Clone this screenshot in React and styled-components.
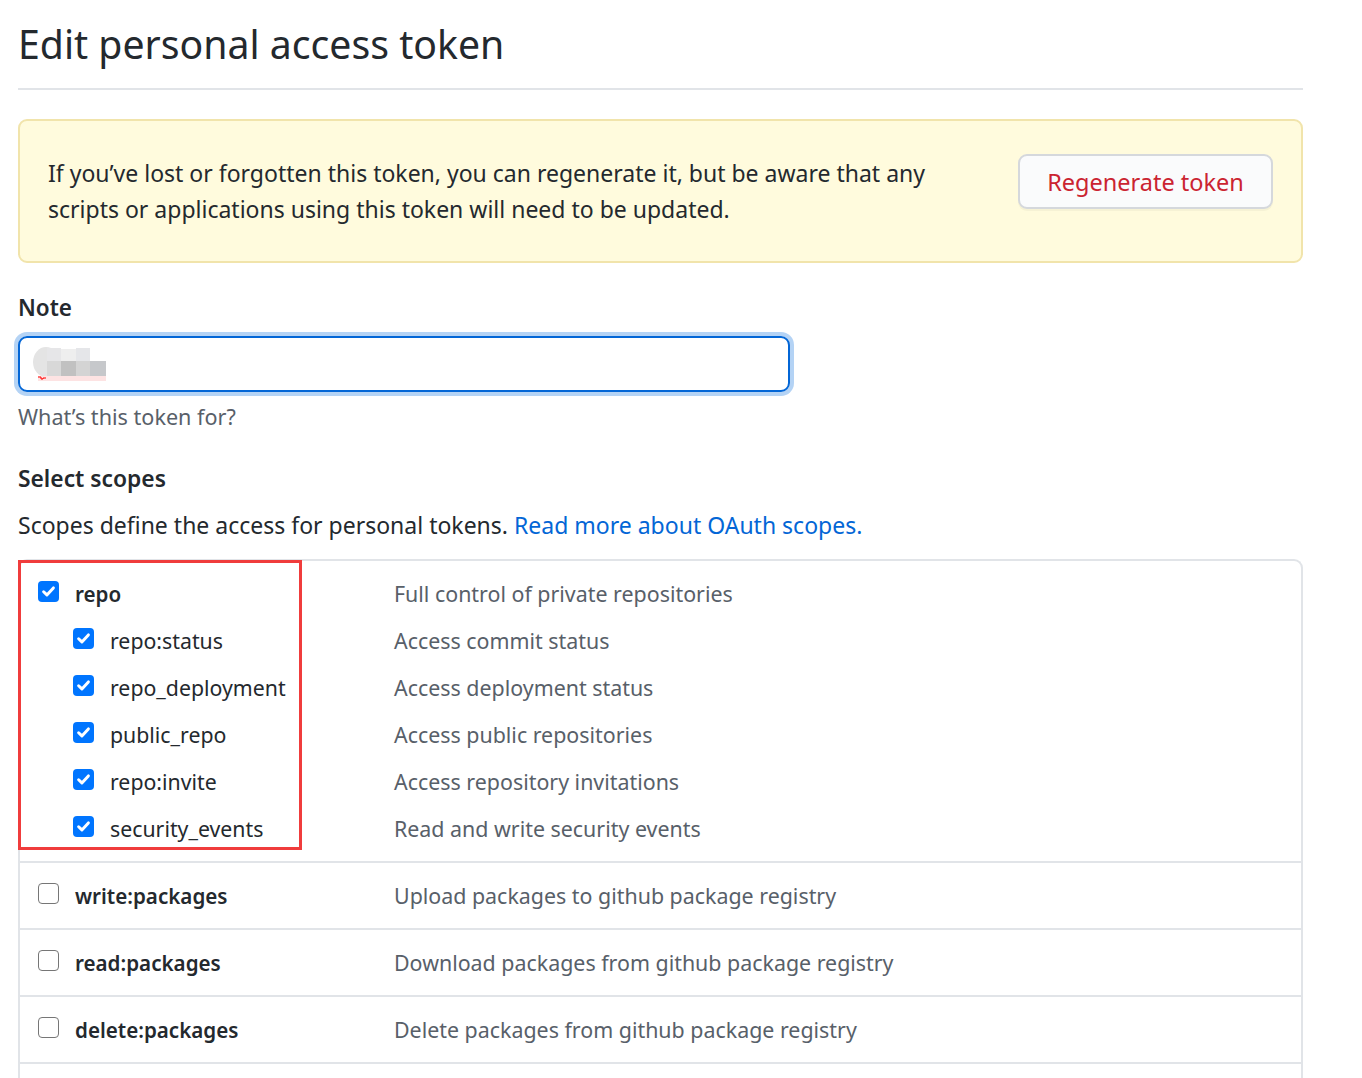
import React from "react";
import styled, { createGlobalStyle } from "styled-components";

const GlobalStyle = createGlobalStyle`
  html, body { margin: 0; padding: 0; background: #fff; }
  body {
    font-family: "Noto Sans", "Open Sans", "Liberation Sans", sans-serif;
    color: #24292e;
  }
`;

const scopeGroups = [
  {
    name: "repo",
    desc: "Full control of private repositories",
    checked: true,
    highlight: true,
    children: [
      { name: "repo:status", desc: "Access commit status" },
      { name: "repo_deployment", desc: "Access deployment status" },
      { name: "public_repo", desc: "Access public repositories" },
      { name: "repo:invite", desc: "Access repository invitations" },
      { name: "security_events", desc: "Read and write security events" },
    ],
  },
  { name: "write:packages", desc: "Upload packages to github package registry" },
  { name: "read:packages", desc: "Download packages from github package registry" },
  { name: "delete:packages", desc: "Delete packages from github package registry" },
  { name: "admin:org", desc: "Full control of orgs and teams, read and write org projects" },
];

const Checkbox = ({ checked }) => (
  <Box $checked={checked}>
    {checked && (
      <svg width="17" height="17" viewBox="0 0 16 16">
        <path
          d="M3.4 8.2 6.5 11.2 12.6 4.6"
          fill="none"
          stroke="#fff"
          strokeWidth="2.8"
          strokeLinecap="round"
          strokeLinejoin="round"
        />
      </svg>
    )}
  </Box>
);

// pixelated (redacted) value in the note field
const Redacted = () => (
  <svg width="75" height="36" viewBox="0 0 75 36">
    <ellipse cx="14" cy="16" rx="13" ry="15" fill="#e4e4e4" />
    <rect x="15" y="2" width="14" height="13" fill="#e6e6e8" />
    <rect x="29" y="3" width="15" height="12" fill="#eeeeee" />
    <rect x="44" y="2" width="14" height="13" fill="#e5e6e9" />
    <rect x="15" y="15" width="14" height="15" fill="#d8d8d8" />
    <rect x="29" y="15" width="15" height="15" fill="#c1c1c1" />
    <rect x="44" y="15" width="14" height="15" fill="#d4d4d4" />
    <rect x="58" y="15" width="16" height="15" fill="#c6c8cb" />
    <rect x="6" y="30" width="68" height="5" fill="#fde3e3" />
    <path d="M6 31h3v2h2v-1h3" stroke="#f00" strokeWidth="1" fill="none" />
  </svg>
);

const App = () => (
  <Page>
    <GlobalStyle />
    <Title>Edit personal access token</Title>

    <Flash>
      <FlashButton>Regenerate token</FlashButton>
      <FlashText>
        If you’ve lost or forgotten this token, you can regenerate it, but be aware that any
        <br />
        scripts or applications using this token will need to be updated.
      </FlashText>
    </Flash>

    <Label>Note</Label>
    <NoteInput>
      <Redacted />
    </NoteInput>
    <Hint>What’s this token for?</Hint>

    <Label $spaced>Select scopes</Label>
    <Lead>
      Scopes define the access for personal tokens. <Link>Read more about OAuth scopes.</Link>
    </Lead>

    <ScopeTable>
      {scopeGroups.map((group) => (
        <Group key={group.name}>
          {group.highlight && <Highlight />}
          <Row>
            <NameCell>
              <Checkbox checked={group.checked} />
              <ParentName>{group.name}</ParentName>
            </NameCell>
            <Desc>{group.desc}</Desc>
          </Row>
          {(group.children || []).map((child) => (
            <Row key={child.name}>
              <NameCell $child>
                <Checkbox checked={group.checked} />
                <ChildName>{child.name}</ChildName>
              </NameCell>
              <Desc>{child.desc}</Desc>
            </Row>
          ))}
        </Group>
      ))}
    </ScopeTable>
  </Page>
);

export default App;

const Page = styled.div`
  width: 1285px;
  padding: 0 0 0 18px;
`;

const Title = styled.h2`
  margin: 19px 0 0;
  padding-bottom: 19px;
  font-size: 39.2px;
  line-height: 50px;
  font-weight: 400;
  border-bottom: 2px solid #e1e4e8;
`;

const Flash = styled.div`
  margin-top: 29px;
  padding: 34px 28px;
  background: #fffbdd;
  border: 2px solid #f1e4ab;
  border-radius: 9px;
  display: flex;
  flex-direction: row-reverse;
  justify-content: space-between;
  align-items: flex-start;
`;

const FlashText = styled.p`
  margin: 0;
  font-size: 23px;
  line-height: 36px;
`;

const FlashButton = styled.button`
  margin-top: -1px;
  width: 255px;
  height: 55px;
  background: #fafbfc;
  border: 2px solid #d5d8dc;
  border-radius: 9px;
  box-shadow: 0 2px 0 rgba(27, 31, 35, 0.04);
  color: #cb2431;
  font-family: inherit;
  font-size: 23.5px;
  font-weight: 400;
`;

const Label = styled.div`
  margin-top: ${(p) => (p.$spaced ? "30px" : "28px")};
  font-size: ${(p) => (p.$spaced ? "22.8px" : "22.5px")};
  line-height: 33px;
  font-weight: 600;
`;

const NoteInput = styled.div`
  margin-top: 12px;
  box-sizing: border-box;
  width: 772px;
  height: 56px;
  border: 2px solid #0366d6;
  border-radius: 9px;
  box-shadow: 0 0 0 4px #b4d3f5;
  display: flex;
  align-items: center;
  padding-left: 12px;
`;

const Hint = styled.div`
  margin-top: 10px;
  font-size: 21.6px;
  line-height: 30px;
  color: #586069;
`;

const Lead = styled.p`
  margin: 14px 0 0;
  font-size: 23px;
  line-height: 33px;
`;

const Link = styled.a`
  color: #0366d6;
  text-decoration: none;
  cursor: pointer;
`;

const ScopeTable = styled.div`
  margin-top: 17px;
  border: 2px solid #e1e4e8;
  border-bottom: none;
  border-radius: 9px 9px 0 0;
`;

const Group = styled.div`
  position: relative;
  padding: 9px 0;
  border-bottom: 2px solid #e1e4e8;
`;

const Highlight = styled.div`
  position: absolute;
  left: -2px;
  top: -1px;
  width: 284px;
  height: 290px;
  box-sizing: border-box;
  border: 3px solid #f03c3c;
  pointer-events: none;
`;

const Row = styled.div`
  display: flex;
  align-items: center;
  height: 47px;
`;

const NameCell = styled.div`
  width: 374px;
  display: flex;
  align-items: center;
  gap: 16px;
  padding-left: ${(p) => (p.$child ? "53px" : "18px")};
  box-sizing: border-box;
`;

const Box = styled.span`
  flex: none;
  box-sizing: border-box;
  width: 21px;
  height: 21px;
  margin-top: -5px;
  border-radius: 4px;
  display: inline-flex;
  align-items: center;
  justify-content: center;
  background: ${(p) => (p.$checked ? "#0075ff" : "#fff")};
  border: ${(p) => (p.$checked ? "none" : "1.5px solid #767676")};
`;

const ParentName = styled.span`
  font-size: 20.6px;
  font-weight: 600;
`;

const ChildName = styled.span`
  font-size: 21.3px;
`;

const Desc = styled.span`
  font-size: 21.4px;
  color: #586069;
`;
